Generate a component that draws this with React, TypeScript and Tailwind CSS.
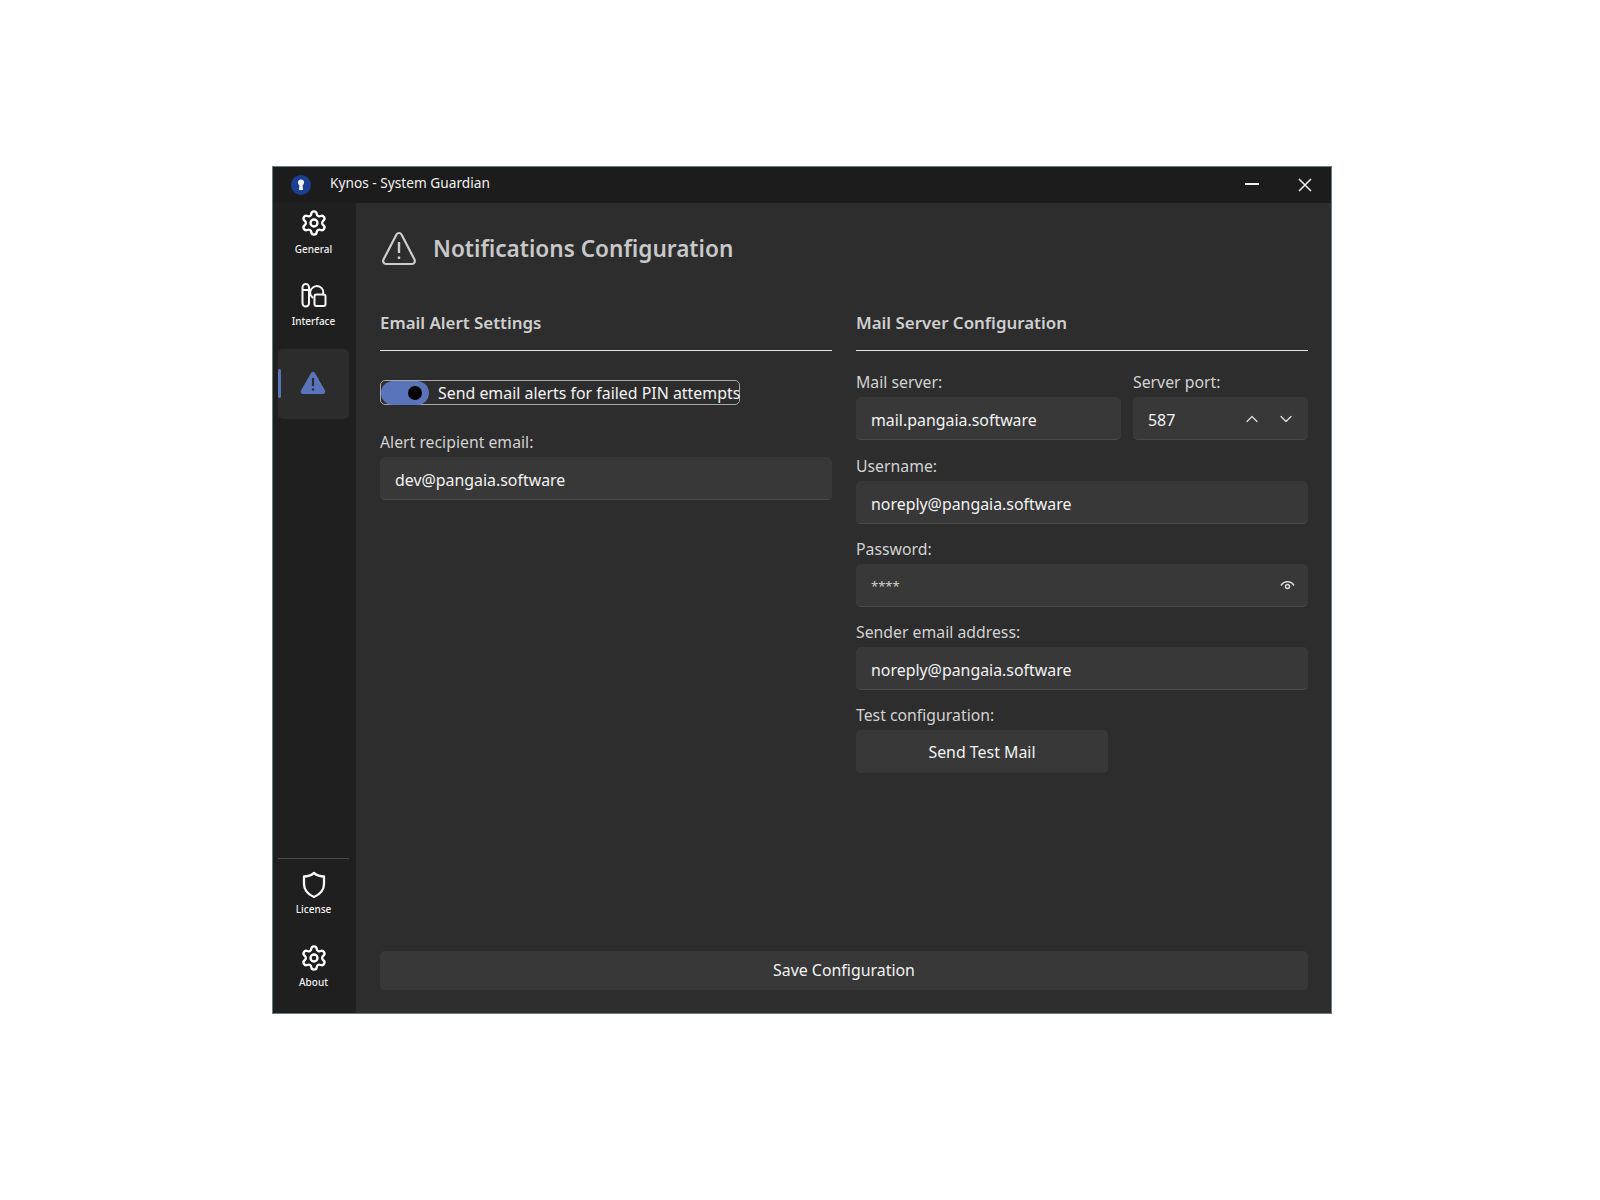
import { ChevronDown, ChevronUp, Settings } from "lucide-react";
import type { ReactNode } from "react";

const FONT = "[font-family:'Noto_Sans','Open_Sans',sans-serif]";

function Logo() {
  return (
    <svg width="20" height="20" viewBox="0 0 20 20">
      <circle cx="10" cy="10" r="10" fill="#1c3f94" />
      <circle cx="10" cy="7.5" r="3" fill="#f2f2f2" />
      <path d="M8.6 8h2.8l.6 7H8z" fill="#f2f2f2" />
    </svg>
  );
}

function InterfaceIcon() {
  return (
    <svg width="26" height="26" viewBox="0 0 26 26" fill="none" stroke="#f6f6f6" strokeWidth="2" strokeLinecap="round" strokeLinejoin="round">
      <rect x="1.5" y="2" width="6.5" height="22.5" rx="3.25" />
      <path d="M2 8h5.5" />
      <path d="M11.5 15.5a6.5 6.5 0 1 1 10.5-3" />
      <rect x="13.5" y="12.5" width="11" height="11.5" rx="2" />
    </svg>
  );
}

function ShieldIcon() {
  return (
    <svg width="26" height="28" viewBox="0 0 26 28" fill="none" stroke="#f6f6f6" strokeWidth="2.3" strokeLinejoin="round">
      <path d="M13 2C10 4.5 6.5 5.5 3 5.5V13c0 6.5 4.5 10.5 10 13 5.5-2.5 10-6.5 10-13V5.5C19.5 5.5 16 4.5 13 2z" />
    </svg>
  );
}

function HeadingAlert() {
  return (
    <svg width="36" height="36" viewBox="0 0 36 36" fill="none" stroke="#cdcdcd" strokeWidth="2.2" strokeLinejoin="round" className="mb-[5px]">
      <path d="M15.5 4.5c1.1-2 3.9-2 5 0l13 25c1 2-.3 4.5-2.5 4.5H5c-2.2 0-3.500-2.500-2.500-4.500z" />
      <path d="M18 12v11" strokeWidth="2.4" />
      <path d="M18 26.5v2.5" strokeWidth="2.4" />
    </svg>
  );
}

function ActiveAlert() {
  return (
    <svg width="26" height="23" viewBox="0 0 26 23">
      <path d="M11 2c.9-1.600 3.100-1.600 4 0l10 17.500c.9 1.600-.2 3.500-2 3.500H3c-1.800 0-2.900-1.900-2-3.500z" fill="#5a74bb" />
      <path d="M13 7v8M13 17.5v2" stroke="#2c2c2c" strokeWidth="2.2" />
    </svg>
  );
}

function EyeIcon() {
  return (
    <svg width="15" height="12" viewBox="0 0 15 12" fill="none" stroke="#d8d8d8" strokeWidth="1.5">
      <path d="M1 6.5C4 1.5 11 1.5 14 6.5" />
      <circle cx="7.5" cy="7.5" r="2" />
    </svg>
  );
}

function NavItem({ icon, label, tight }: { icon: ReactNode; label: string; tight?: boolean }) {
  return (
    <div className="flex h-[70px] flex-col items-center pt-[3px] text-white">
      <div className="flex h-[30px] items-center">{icon}</div>
      <span className={`${tight ? "mt-[2px]" : "mt-[4px]"} text-[10px] leading-[14px] font-medium text-[#f0f0f0]`}>{label}</span>
    </div>
  );
}

function Field({ label, value, className = "", right, small }: { label: string; value: string; className?: string; right?: ReactNode; small?: boolean }) {
  return (
    <div className={className}>
      <div className="h-[25px] text-[15.8px] leading-[20px] text-[#d2d2d2]">{label}</div>
      <div className="flex h-[43px] items-center justify-between rounded-[5px] border-b border-b-[#4a4a4a] bg-[#383838] pr-[13px] pl-[15px] text-[#f2f2f2]">
        <span className={small ? "pt-[3px] text-[13px] text-[#cfcfcf]" : "pt-[5px] text-[15.9px]"}>{value}</span>
        {right}
      </div>
    </div>
  );
}

function SectionTitle({ children }: { children: ReactNode }) {
  return (
    <div className="h-[43px] border-b border-b-[#e4e4e4] pt-[2px] text-[16.9px] leading-[26px] font-semibold text-[#cfcfcf]">
      {children}
    </div>
  );
}

export default function App() {
  return (
    <div className={`min-h-[1200px] bg-white pt-[166px] pl-[272px] ${FONT}`}>
      <div className="flex h-[848px] w-[1060px] flex-col border border-[#6d7c82] bg-[#1f1f1f]">
        <div className="flex h-[36px] shrink-0 items-center bg-[#1c1c1c] pl-[18px]">
          <Logo />
          <span className="ml-[19px] pb-[4px] text-[13.7px] text-[#f0f0f0]">Kynos - System Guardian</span>
          <div className="mb-[2px] ml-auto h-[2px] w-[14px] bg-[#f0f0f0]" />
          <svg width="14" height="14" viewBox="0 0 14 14" className="mr-[19px] ml-[39px]" stroke="#f0f0f0" strokeWidth="1.5">
            <path d="M1 1l12 12M13 1L1 13" />
          </svg>
        </div>
        <div className="flex min-h-0 flex-1">
          <div className="flex w-[83px] shrink-0 flex-col bg-[#1f1f1f] pt-[2px] pb-[3px] pl-[5px]">
            <div className="flex w-[71px] flex-col gap-[2px]">
              <NavItem icon={<Settings size={28} strokeWidth={2} />} label="General" />
              <NavItem icon={<InterfaceIcon />} label="Interface" />
              <div className="relative flex h-[70px] items-center justify-center rounded-[5px] bg-[#2c2c2c] pr-[1px] pb-[4px]">
                <div className="absolute top-[20px] left-0 h-[29px] w-[3px] rounded-full bg-[#5a74bb]" />
                <ActiveAlert />
              </div>
            </div>
            <div className="mt-auto w-[71px]">
              <div className="mb-[8px] h-px bg-[#4a4a4a]" />
              <div className="mb-[3px]">
                <NavItem icon={<ShieldIcon />} label="License" tight />
              </div>
              <NavItem icon={<Settings size={28} strokeWidth={2} />} label="About" tight />
            </div>
          </div>
          <div className="flex min-w-0 flex-1 flex-col bg-[#2d2d2d] pt-[25px] pr-[23px] pb-[23px] pl-[24px]">
            <div className="flex h-[44px] items-center pl-[1px]">
              <HeadingAlert />
              <span className="ml-[16px] pb-[2px] text-[22.6px] font-semibold text-[#c8c8c8]">Notifications Configuration</span>
            </div>
            <div className="mt-[36px] grid grid-cols-[452px_452px] gap-x-[24px]">
              <div>
                <SectionTitle>Email Alert Settings</SectionTitle>
                <div className="mt-[29px] flex h-[25px] w-[360px] items-center gap-[9px] rounded-[5px] border border-[#a8a8a8]">
                  <div className="relative h-[24px] w-[48px] shrink-0 rounded-full bg-[#5a74bb]">
                    <div className="absolute top-[5px] left-[27px] h-[14px] w-[14px] rounded-full bg-black" />
                  </div>
                  <span className="pt-[2px] text-[15.9px] whitespace-nowrap text-[#f2f2f2]">Send email alerts for failed PIN attempts</span>
                </div>
                <Field label="Alert recipient email:" value="dev@pangaia.software" className="mt-[27px]" />
              </div>
              <div>
                <SectionTitle>Mail Server Configuration</SectionTitle>
                <div className="mt-[21px] flex gap-[12px]">
                  <Field label="Mail server:" value="mail.pangaia.software" className="w-[265px]" />
                  <Field
                    label="Server port:"
                    value="587"
                    className="w-[175px]"
                    right={
                      <span className="-mr-[1px] flex gap-[14px] pt-[2px] text-[#e0e0e0]">
                        <ChevronUp size={20} strokeWidth={1.5} />
                        <ChevronDown size={20} strokeWidth={1.5} />
                      </span>
                    }
                  />
                </div>
                <Field label="Username:" value="noreply@pangaia.software" className="mt-[16px]" />
                <Field label="Password:" value="****" small className="mt-[15px]" right={<EyeIcon />} />
                <Field label="Sender email address:" value="noreply@pangaia.software" className="mt-[15px]" />
                <div className="mt-[15px] h-[25px] text-[15.8px] leading-[20px] text-[#d2d2d2]">Test configuration:</div>
                <div className="flex h-[43px] w-[252px] items-center justify-center rounded-[5px] bg-[#383838] pt-[2px] text-[15.9px] text-[#f2f2f2]">
                  Send Test Mail
                </div>
              </div>
            </div>
            <div className="mt-auto flex h-[39px] items-center justify-center rounded-[5px] bg-[#383838] text-[15.9px] text-[#f2f2f2]">
              Save Configuration
            </div>
          </div>
        </div>
      </div>
    </div>
  );
}
